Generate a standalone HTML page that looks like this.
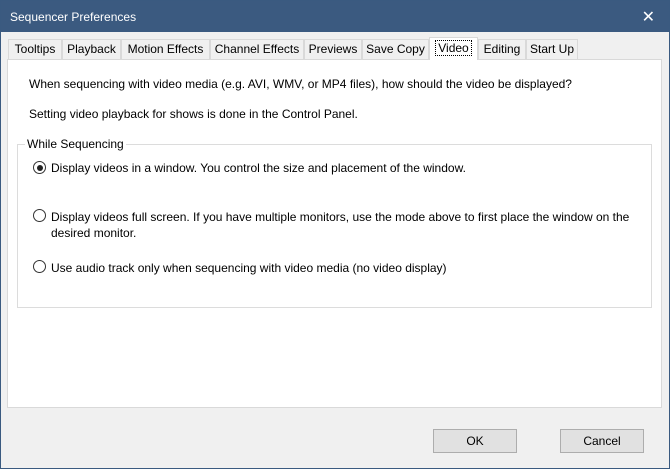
<!DOCTYPE html>
<html><head><style>
body{margin:0;width:670px;height:469px;overflow:hidden;font-family:"Liberation Sans",sans-serif;font-size:12px;color:#000;}
.win{position:absolute;left:0;top:0;width:668px;height:467px;border:1px solid #3a5a80;background:#f0f0f0;}
.title{position:absolute;left:0;top:0;width:668px;height:31px;background:#3b5a80;color:#fff;font-size:12px;}
.title span{position:absolute;left:9px;top:9px;}
.x{position:absolute;right:14px;top:6px;font-size:16px;color:#fff;font-weight:normal;}
.a{position:absolute;white-space:nowrap;}
.tab{position:absolute;top:39px;height:20px;border:1px solid #d9d9d9;border-bottom:none;background:#f0f0f0;box-sizing:border-box;text-align:center;line-height:19px;}
.panel{position:absolute;left:7px;top:59px;width:655px;height:349px;background:#fff;border:1px solid #d9d9d9;box-sizing:border-box;}
.grp{position:absolute;left:17px;top:144px;width:635px;height:164px;border:1px solid #dcdcdc;box-sizing:border-box;}
.r{position:absolute;left:33px;width:11px;height:11px;border:1px solid #333;border-radius:50%;background:#fff;}
.btn{position:absolute;top:429px;width:84px;height:24px;background:#e1e1e1;border:1px solid #adadad;box-sizing:border-box;text-align:center;line-height:22px;}
</style></head><body>
<div class="win">
<div class="title"><span>Sequencer Preferences</span><div class="x">✕</div></div>
</div>
<div class="panel"></div>
<div class="tab" style="left:8px;width:54px">Tooltips</div>
<div class="tab" style="left:62px;width:59px">Playback</div>
<div class="tab" style="left:121px;width:89px">Motion Effects</div>
<div class="tab" style="left:210px;width:94px">Channel Effects</div>
<div class="tab" style="left:304px;width:58px">Previews</div>
<div class="tab" style="left:362px;width:67px">Save Copy</div>
<div class="tab" style="left:429px;top:37px;height:23px;width:49px;background:#fff;line-height:20px;"><span style="border:1px dotted #000;padding:0 2px">Video</span></div>
<div class="tab" style="left:478px;width:48px">Editing</div>
<div class="tab" style="left:526px;width:52px">Start Up</div>
<div class="a" style="left:29px;top:77px">When sequencing with video media (e.g. AVI, WMV, or MP4 files), how should the video be displayed?</div>
<div class="a" style="left:29px;top:107px">Setting video playback for shows is done in the Control Panel.</div>
<div class="grp"></div>
<div class="a" style="left:25px;top:137px;background:#fff;padding:0 2px">While Sequencing</div>
<div class="r" style="top:161px"><div style="position:absolute;left:2.5px;top:2.5px;width:6px;height:6px;border-radius:50%;background:#222"></div></div>
<div class="a" style="left:51px;top:161px">Display videos in a window. You control the size and placement of the window.</div>
<div class="r" style="top:209px"></div>
<div class="a" style="left:51px;top:210px">Display videos full screen. If you have multiple monitors, use the mode above to first place the window on the</div>
<div class="a" style="left:51px;top:226px">desired monitor.</div>
<div class="r" style="top:260px"></div>
<div class="a" style="left:51px;top:261px">Use audio track only when sequencing with video media (no video display)</div>
<div class="btn" style="left:433px">OK</div>
<div class="btn" style="left:560px">Cancel</div>
</body></html>
